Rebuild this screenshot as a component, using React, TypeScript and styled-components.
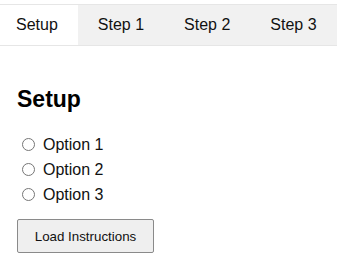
import { useState, FC } from 'react'
import styled, { createGlobalStyle } from 'styled-components'

const GlobalStyle = createGlobalStyle`
  html, body {
    margin: 0;
    padding: 0;
    background: #ffffff;
  }
  body {
    padding-top: 4px;
    font-family: "Liberation Sans", Arial, sans-serif;
    color: #111111;
  }
`

const TabBar = styled.div`
  display: flex;
  flex-direction: row;
  height: 40px;
  background: #f1f1f1;
  border-top: 1px solid #e6e6e6;
  border-bottom: 1px solid #e6e6e6;
`

const Tab = styled.button<{ $active: boolean; $first: boolean }>`
  display: flex;
  align-items: center;
  height: 100%;
  margin: 0;
  padding: 0 20px 0 ${({ $first }) => ($first ? '16px' : '20px')};
  border: none;
  background: ${({ $active }) => ($active ? '#ffffff' : 'transparent')};
  font-family: inherit;
  font-size: 16px;
  color: #111111;
  cursor: pointer;
`

const Content = styled.div`
  padding: 41px 17px 0;
`

const Heading = styled.h2`
  margin: 0 0 20px;
  font-size: 23px;
  line-height: 25px;
  font-weight: bold;
  color: #000000;
`

const OptionList = styled.div`
  display: flex;
  flex-direction: column;
`

const OptionRow = styled.label`
  display: flex;
  align-items: center;
  gap: 8px;
  height: 25px;
  font-size: 16px;
  cursor: pointer;

  input {
    width: 13px;
    height: 13px;
    margin: 0 0 0 5px;
  }
`

const LoadButton = styled.button`
  margin-top: 12px;
  width: 137px;
  height: 34px;
  padding: 0;
  border: 1px solid #8a8a8a;
  border-radius: 2px;
  background: #efefef;
  font-family: inherit;
  font-size: 13.33px;
  color: #111111;
  cursor: pointer;
`

const tabs = ['Setup', 'Step 1', 'Step 2', 'Step 3']
const options = ['Option 1', 'Option 2', 'Option 3']

const App: FC = () => {
  const [active, setActive] = useState(0)
  const [choice, setChoice] = useState<string | null>(null)

  return (
    <>
      <GlobalStyle />
      <TabBar>
        {tabs.map((t, i) => (
          <Tab
            key={t}
            $active={active === i}
            $first={i === 0}
            onClick={() => setActive(i)}
          >
            {t}
          </Tab>
        ))}
      </TabBar>
      <Content>
        <Heading>Setup</Heading>
        <OptionList>
          {options.map((o) => (
            <OptionRow key={o}>
              <input
                type="radio"
                name="setup"
                checked={choice === o}
                onChange={() => setChoice(o)}
              />
              {o}
            </OptionRow>
          ))}
        </OptionList>
        <LoadButton>Load Instructions</LoadButton>
      </Content>
    </>
  )
}

export default App
